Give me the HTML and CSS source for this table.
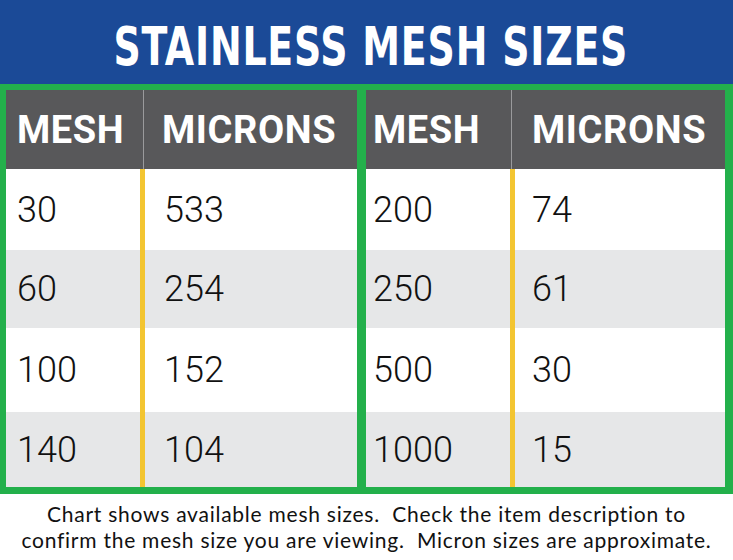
FILE: index.html
```html
<!DOCTYPE html>
<html>
<head>
<meta charset="utf-8">
<link rel="stylesheet" href="styles.css">
</head>
<body>
<div class="page">
  <header class="title"><h1 class="title-text">STAINLESS MESH SIZES</h1></header>
  <div class="tables">
    <div class="table table-left">
      <div class="row head"><div class="c1">MESH</div><div class="c2">MICRONS</div></div>
      <div class="row r1 white"><div class="c1">30</div><div class="c2">533</div></div>
      <div class="row r2 grey"><div class="c1">60</div><div class="c2">254</div></div>
      <div class="row r3 white"><div class="c1">100</div><div class="c2">152</div></div>
      <div class="row r4 grey"><div class="c1">140</div><div class="c2">104</div></div>
    </div>
    <div class="table table-right">
      <div class="row head"><div class="c1">MESH</div><div class="c2">MICRONS</div></div>
      <div class="row r1 white"><div class="c1">200</div><div class="c2">74</div></div>
      <div class="row r2 grey"><div class="c1">250</div><div class="c2">61</div></div>
      <div class="row r3 white"><div class="c1">500</div><div class="c2">30</div></div>
      <div class="row r4 grey"><div class="c1">1000</div><div class="c2">15</div></div>
    </div>
  </div>
  <div class="caption">
    <p class="caption-line">Chart shows available mesh sizes.&nbsp; Check the item description to</p>
    <p class="caption-line">confirm the mesh size you are viewing.&nbsp; Micron sizes are approximate.</p>
  </div>
</div>
</body>
</html>
```
FILE: styles.css
```css
html, body { margin: 0; padding: 0; background: #fff; }
.page { width: 733px; height: 560px; overflow: hidden; }
.title {
  height: 84px;
  background: #1b4a97;
  display: flex;
  align-items: center;
  justify-content: center;
  padding-left: 8px;
  box-sizing: border-box;
}
.title-text {
  margin: 0;
  color: #fff;
  font-family: "DejaVu Sans Condensed", "DejaVu Sans", sans-serif;
  font-stretch: condensed;
  font-weight: 700;
  font-size: 53px;
  line-height: 1;
  letter-spacing: 1px;
  transform: scaleX(0.795);
  padding-top: 8px;
}
.tables {
  background: #23b04b;
  display: flex;
  gap: 9px;
  padding: 6px 8px 7px 6px;
}
.table { display: flex; flex-direction: column; }
.table-left { width: 351px; }
.table-right { width: 359px; }
.row { display: grid; align-items: stretch; }
.row > div { display: flex; align-items: center; }
.head { height: 79px; background: #58585a; color: #fff;
  font-family: Roboto, "Liberation Sans", sans-serif; font-weight: 700; font-size: 38px; letter-spacing: 0.6px; }
.r1 { height: 81px; }
.r2 { height: 78px; }
.r3 { height: 84px; }
.r4 { height: 75px; }
.white { background: #fff; }
.grey { background: #e6e7e8; }
.white, .grey { font-family: Roboto, "Liberation Sans", sans-serif; font-weight: 300; font-size: 36px; color: #111; }
.table-left .head { grid-template-columns: 137px 1fr; }
.table-left .head .c1 { padding-left: 11px; }
.table-left .head .c2 { border-left: 1px solid #9a9a9c; padding-left: 18px; }
.table-left .white, .table-left .grey { grid-template-columns: 134px 1fr; }
.table-left .white .c1, .table-left .grey .c1 { padding-left: 11px; }
.table-left .white .c2, .table-left .grey .c2 { border-left: 5px solid #f3c531; padding-left: 19px; }
.table-right .head { grid-template-columns: 145px 1fr; }
.table-right .head .c1 { padding-left: 7px; }
.table-right .head .c2 { border-left: 1px solid #9a9a9c; padding-left: 20px; }
.table-right .white, .table-right .grey { grid-template-columns: 144px 1fr; }
.table-right .white .c1, .table-right .grey .c1 { padding-left: 7px; }
.table-right .white .c2, .table-right .grey .c2 { border-left: 5px solid #f3c531; padding-left: 17px; }
.caption {
  padding-top: 7px;
  display: flex;
  flex-direction: column;
  align-items: center;
  color: #111;
}
.caption-line {
  margin: 0;
  height: 26px;
  font-family: Lato, "Open Sans", sans-serif;
  font-size: 21px;
  line-height: 26px;
  letter-spacing: 0.75px;
  white-space: pre;
}
```
